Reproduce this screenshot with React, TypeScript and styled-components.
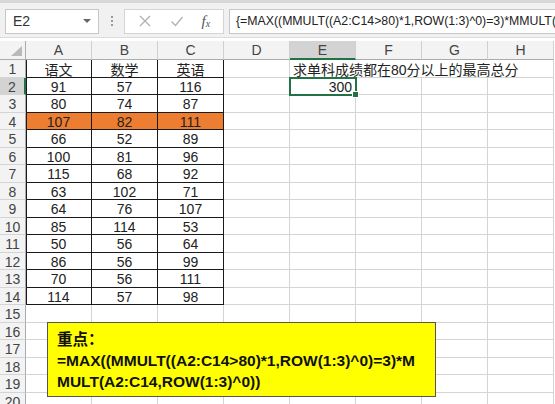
import React from 'react';
import styled, { createGlobalStyle, css } from 'styled-components';

const GlobalStyle = createGlobalStyle`
  html, body {
    margin: 0;
    padding: 0;
    background: #fff;
    overflow: hidden;
  }
  body {
    font-family: "Liberation Sans", "Noto Sans CJK SC", sans-serif;
    color: #222;
  }
`;

const Page = styled.div`
  position: relative;
  width: 555px;
  height: 404px;
  overflow: hidden;
`;

const Toolbar = styled.div`
  display: flex;
  align-items: center;
  height: 38px;
  box-sizing: border-box;
  border-top: 3px solid #d8d8d8;
  border-bottom: 1px solid #dcdcdc;
  background: #f1f1f1;
  padding: 2px 0 0 5px;
  margin-bottom: 3px;
`;

const NameBox = styled.div`
  display: flex;
  align-items: center;
  justify-content: space-between;
  width: 94px;
  height: 25px;
  box-sizing: border-box;
  background: #fff;
  border: 1px solid #c6c6c6;
  padding: 0 7px;
  font-size: 14px;
  color: #333;
`;

const Caret = styled.span`
  width: 0;
  height: 0;
  border-left: 4px solid transparent;
  border-right: 4px solid transparent;
  border-top: 4px solid #666;
`;

const Grip = styled.div`
  display: flex;
  flex-direction: column;
  gap: 2px;
  margin: 0 11px 0 12px;
  span {
    width: 2px;
    height: 2px;
    background: #9a9a9a;
  }
`;

const ButtonBox = styled.div`
  display: flex;
  align-items: center;
  justify-content: space-around;
  width: 100px;
  height: 25px;
  box-sizing: border-box;
  background: #fff;
  border: 1px solid #d4d4d4;
  margin-right: 5px;
  padding: 0 4px;
`;

const Fx = styled.span`
  font-family: "Liberation Serif", serif;
  font-style: italic;
  font-size: 15px;
  color: #555;
  sub {
    font-size: 10px;
    vertical-align: -1px;
  }
`;

const FormulaInput = styled.div`
  flex: 1;
  height: 25px;
  box-sizing: border-box;
  background: #fff;
  border: 1px solid #c6c6c6;
  border-right: none;
  padding: 4px 0 0 6px;
  font-size: 12.3px;
  color: #222;
  white-space: nowrap;
  overflow: hidden;
`;

const Sheet = styled.div`
  display: grid;
  grid-template-columns: 26px repeat(8, 66px);
  grid-template-rows: 19px repeat(10, 18px 17px);
  font-size: 14px;
`;

const HeaderCell = styled.div<{ $active?: boolean }>`
  display: flex;
  align-items: center;
  justify-content: center;
  box-sizing: border-box;
  background: ${p => (p.$active ? '#d3d3d3' : '#f3f3f3')};
  border-right: 1px solid #d0d0d0;
  border-bottom: ${p => (p.$active ? '2px solid #217346' : '1px solid #ababab')};
  color: #444;
`;

const Corner = styled.div`
  position: relative;
  box-sizing: border-box;
  background: #f3f3f3;
  border-right: 1px solid #ababab;
  border-bottom: 1px solid #ababab;
  &::after {
    content: '';
    position: absolute;
    right: 3px;
    bottom: 3px;
    width: 11px;
    height: 10px;
    background: #b9b9b9;
    clip-path: polygon(100% 0, 100% 100%, 0 100%);
  }
`;

const RowHead = styled.div<{ $active?: boolean }>`
  display: flex;
  align-items: center;
  justify-content: center;
  box-sizing: border-box;
  background: ${p => (p.$active ? '#d3d3d3' : '#f3f3f3')};
  border-bottom: 1px solid #d4d4d4;
  border-right: ${p => (p.$active ? '2px solid #217346' : '1px solid #ababab')};
  color: #444;
  padding-top: 1px;
`;

const Cell = styled.div<{
  $table?: boolean;
  $first?: boolean;
  $fill?: string;
  $align?: 'left' | 'center' | 'right';
  $span?: number;
  $selected?: boolean;
}>`
  position: relative;
  display: flex;
  align-items: center;
  justify-content: ${p =>
    p.$align === 'right' ? 'flex-end' : p.$align === 'left' ? 'flex-start' : 'center'};
  box-sizing: border-box;
  padding: 1px 3px 0;
  white-space: nowrap;
  background: ${p => p.$fill || 'transparent'};
  border-right: 1px solid ${p => (p.$table ? '#1a1a1a' : '#d4d4d4')};
  border-bottom: 1px solid ${p => (p.$table ? '#1a1a1a' : '#d4d4d4')};
  color: #222;
  ${p => p.$span && css`grid-column: span ${p.$span};`}
  ${p => p.$first && css`box-shadow: inset 1px 0 0 #1a1a1a;`}
  ${p =>
    p.$selected &&
    css`
      z-index: 1;
      border-color: transparent;
      outline: 2px solid #217346;
      outline-offset: -1px;
      &::after {
        content: '';
        position: absolute;
        right: -4px;
        bottom: -4px;
        width: 5px;
        height: 5px;
        background: #217346;
        border: 1px solid #fff;
      }
    `}
`;

const Note = styled.div`
  position: absolute;
  left: 47px;
  top: 322px;
  width: 389px;
  height: 75px;
  box-sizing: border-box;
  background: #ffff00;
  border: 1px solid #555;
  padding: 6px 16px 0 9px;
  font-weight: bold;
  font-size: 15.5px;
  line-height: 21px;
  color: #111;
  word-break: break-all;
`;

const columns = ['A', 'B', 'C', 'D', 'E', 'F', 'G', 'H'];

const scores: number[][] = [
  [91, 57, 116],
  [80, 74, 87],
  [107, 82, 111],
  [66, 52, 89],
  [100, 81, 96],
  [115, 68, 92],
  [63, 102, 71],
  [64, 76, 107],
  [85, 114, 53],
  [50, 56, 64],
  [86, 56, 99],
  [70, 56, 111],
  [114, 57, 98],
];

const formula = '=MAX((MMULT((A2:C14>80)*1,ROW(1:3)^0)=3)*MMULT(A2:C14,ROW(1:3)^0))';

const CloseIcon = () => (
  <svg width="14" height="14" viewBox="0 0 14 14">
    <path d="M2 2 L12 12 M12 2 L2 12" stroke="#b0b0b0" strokeWidth="1.3" fill="none" />
  </svg>
);

const CheckIcon = () => (
  <svg width="14" height="14" viewBox="0 0 14 14">
    <path d="M1.5 7.5 L5.5 11.5 L12.5 3" stroke="#b0b0b0" strokeWidth="1.3" fill="none" />
  </svg>
);

const App: React.FC = () => {
  const renderRow = (r: number) => {
    const cells: React.ReactNode[] = [];
    if (r === 1) {
      ['语文', '数学', '英语'].forEach((t, i) =>
        cells.push(<Cell key={`h${i}`} $table $first={i === 0}>{t}</Cell>),
      );
      cells.push(<Cell key="d1" />);
      cells.push(
        <Cell key="e1" $span={4} $align="left">
          求单科成绩都在80分以上的最高总分
        </Cell>,
      );
      return cells;
    }
    const data = scores[r - 2];
    columns.forEach((c, i) => {
      if (data && i < 3) {
        cells.push(
          <Cell key={c} $table $first={i === 0} $fill={r === 4 ? '#ed7d31' : undefined}>
            {data[i]}
          </Cell>,
        );
      } else if (r === 2 && c === 'E') {
        cells.push(<Cell key={c} $align="right" $selected>300</Cell>);
      } else {
        cells.push(<Cell key={c} />);
      }
    });
    return cells;
  };

  return (
    <Page>
      <GlobalStyle />
      <Toolbar>
        <NameBox>
          E2
          <Caret />
        </NameBox>
        <Grip>
          <span />
          <span />
          <span />
        </Grip>
        <ButtonBox>
          <CloseIcon />
          <CheckIcon />
          <Fx>f<sub>x</sub></Fx>
        </ButtonBox>
        <FormulaInput>{`{${formula}}`}</FormulaInput>
      </Toolbar>

      <Sheet>
        <Corner />
        {columns.map(c => (
          <HeaderCell key={c} $active={c === 'E'}>{c}</HeaderCell>
        ))}
        {Array.from({ length: 20 }, (_, i) => i + 1).map(r => (
          <React.Fragment key={r}>
            <RowHead $active={r === 2}>{r}</RowHead>
            {renderRow(r)}
          </React.Fragment>
        ))}
      </Sheet>

      <Note>
        重点：
        <br />
        {formula}
      </Note>
    </Page>
  );
};

export default App;
